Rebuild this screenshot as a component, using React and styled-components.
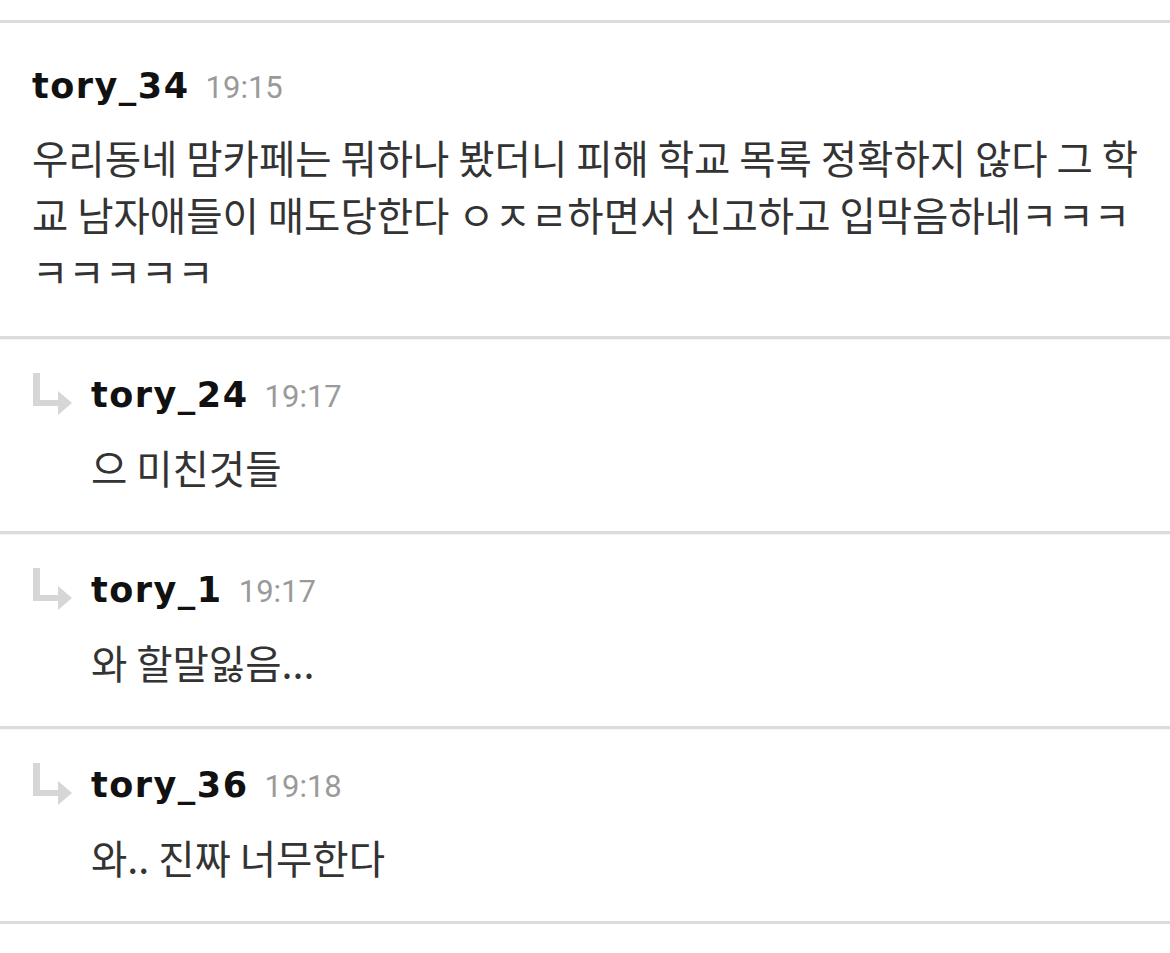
import styled, { createGlobalStyle } from 'styled-components';

const Global = createGlobalStyle`
  html, body { margin: 0; padding: 0; background: #fff; }
  body { font-family: "Noto Sans CJK KR", "Noto Sans", sans-serif; }
`;

const comments = [
  {
    name: 'tory_34',
    time: '19:15',
    text: '우리동네 맘카페는 뭐하나 봤더니 피해 학교 목록 정확하지 않다 그 학교 남자애들이 매도당한다 ㅇㅈㄹ하면서 신고하고 입막음하네ㅋㅋㅋㅋㅋㅋㅋㅋ',
  },
  { name: 'tory_24', time: '19:17', text: '으 미친것들', reply: true },
  { name: 'tory_1', time: '19:17', text: '와 할말잃음...', reply: true },
  { name: 'tory_36', time: '19:18', text: '와.. 진짜 너무한다', reply: true },
];

const Page = styled.div`
  width: 1170px;
  padding-top: 20px;
`;

const List = styled.ul`
  list-style: none;
  margin: 0;
  padding: 0;
  border-top: 3px solid #dcdcdc;
`;

const Item = styled.li`
  display: flex;
  gap: 19px;
  padding: ${({ $reply }) => ($reply ? '34px 32px 0 32px' : '41px 32px 0 32px')};
  height: ${({ $reply }) => ($reply ? '195px' : '316px')};
  box-sizing: border-box;
  border-bottom: 3px solid #dcdcdc;
  box-shadow: 0 1px 0 #f3f3f3;
`;

const ReplyIcon = styled.svg`
  flex: none;
  width: 40px;
  height: 42px;
`;

const Body = styled.div`
  flex: 1;
  min-width: 0;
`;

const Head = styled.div`
  display: flex;
  align-items: baseline;
  gap: 16px;
  height: 44px;
  line-height: 44px;
  white-space: nowrap;
`;

const Name = styled.span`
  font-family: "DejaVu Sans", "Noto Sans", sans-serif;
  font-weight: 700;
  font-size: 35px;
  color: #111;
  letter-spacing: 1.5px;
`;

const Time = styled.span`
  font-family: Roboto, "Noto Sans", sans-serif;
  font-size: 31px;
  color: #9a9a9a;
`;

const Text = styled.p`
  margin: 0;
  font-size: 39.5px;
  line-height: 57px;
  color: #333;
  word-break: break-all;
  padding-top: ${({ $reply }) => ($reply ? '21px' : '20px')};
`;

const Arrow = () => (
  <ReplyIcon viewBox="0 0 40 42">
    <path d="M1 0h7v27h19v6H1z" fill="#d6d6d6" />
    <path d="M26 18l14 12-14 12z" fill="#d6d6d6" />
  </ReplyIcon>
);

export default function App() {
  return (
    <Page>
      <Global />
      <List>
        {comments.map((c) => (
          <Item key={c.name} $reply={c.reply}>
            {c.reply && <Arrow />}
            <Body>
              <Head>
                <Name>{c.name}</Name>
                <Time>{c.time}</Time>
              </Head>
              <Text $reply={c.reply}>{c.text}</Text>
            </Body>
          </Item>
        ))}
      </List>
    </Page>
  );
}
